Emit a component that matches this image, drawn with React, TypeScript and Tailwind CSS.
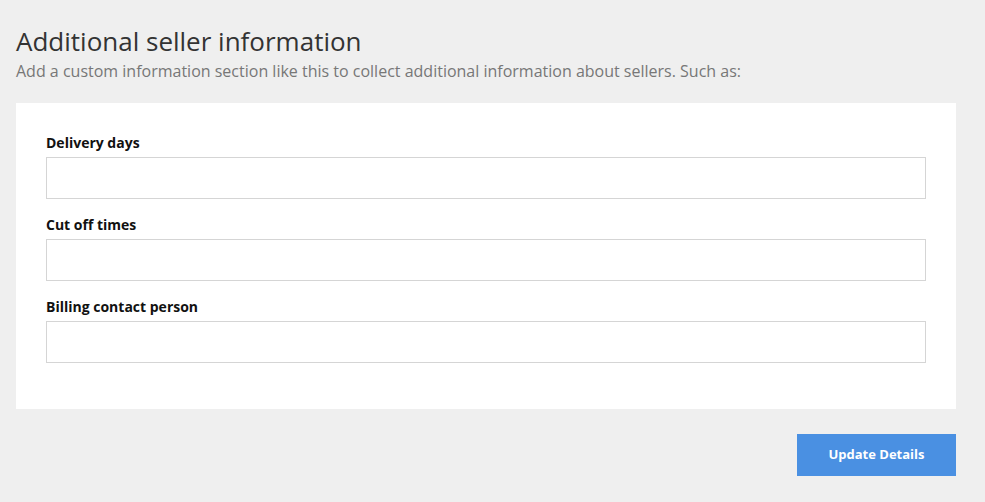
export default function App() {
  const fields = ["Delivery days", "Cut off times", "Billing contact person"];
  return (
    <div className="min-h-[502px] w-full bg-[#efefef] pl-4 pt-[24px] font-['Open_Sans',sans-serif]">
      <div className="w-[940px]">
        <h1 className="text-[26px] leading-[34px] text-[#333333]">Additional seller information</h1>
        <p className="mt-[2px] text-[16px] leading-[22px] text-[#777777]">
          Add a custom information section like this to collect additional information about sellers. Such as:
        </p>
        <div className="mt-[21px] bg-white px-[30px] pt-[30px] pb-[30px]">
          {fields.map((f) => (
            <div key={f} className="mb-4">
              <label className="block text-[14px] font-bold leading-5 text-[#111111] mb-1">{f}</label>
              <input className="block h-[42px] w-full border border-[#d5d5d5] bg-white px-3 outline-none" />
            </div>
          ))}
        </div>
        <div className="mt-[25px] flex justify-end">
          <button className="h-[42px] w-[159px] bg-[#4a90e2] text-[13px] font-bold text-white">Update Details</button>
        </div>
      </div>
    </div>
  );
}
